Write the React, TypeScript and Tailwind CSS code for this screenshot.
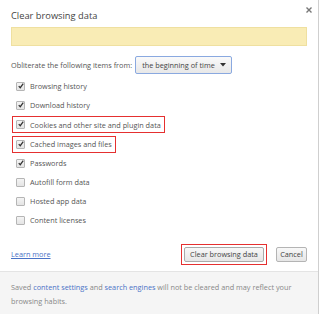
import React from "react";

const items = [
  { label: "Browsing history", checked: true, box: false },
  { label: "Download history", checked: true, box: false },
  { label: "Cookies and other site and plugin data", checked: true, box: true },
  { label: "Cached images and files", checked: true, box: true },
  { label: "Passwords", checked: true, box: false },
  { label: "Autofill form data", checked: false, box: false },
  { label: "Hosted app data", checked: false, box: false },
  { label: "Content licenses", checked: false, box: false },
];

function Check({ checked }: { checked: boolean }) {
  return (
    <span className="w-[9px] h-[9px] border border-[#b5b5b5] bg-gradient-to-b from-[#f4f4f4] to-[#e4e4e4] rounded-[1px] flex items-center justify-center shrink-0">
      {checked && (
        <svg width="8" height="8" viewBox="0 0 8 8" className="-mt-[1px] ml-[1px]">
          <path d="M1 4.2 L3 6.3 L7 0.8" fill="none" stroke="#333" strokeWidth="1.7" />
        </svg>
      )}
    </span>
  );
}

export default function App() {
  return (
    <div
      className="relative w-[319px] h-[314px] bg-white border-r border-[#cfcfcf] flex flex-col overflow-hidden"
      style={{ fontFamily: '"Open Sans", "Noto Sans", sans-serif' }}
    >
      <div className="absolute top-[7px] right-[6px] w-[6px] h-[6px]">
        <svg width="6" height="6" viewBox="0 0 6 6">
          <path d="M0.5 0.5 L5.5 5.5 M5.5 0.5 L0.5 5.5" stroke="#777" strokeWidth="1.4" />
        </svg>
      </div>
      <div className="pl-[11px] pt-[8px] h-[23px] text-[9.3px] leading-[15px] text-[#444] shrink-0">
        Clear browsing data
      </div>
      <div className="mx-[11px] mt-[4px] h-[19px] shrink-0 bg-[#f9ecb5] border border-[#efe0a0]" />
      <div className="mt-[10px] pl-[11px] h-[18px] shrink-0 flex items-center text-[7.3px] text-[#555]">
        <span>Obliterate the following items from:</span>
        <div className="ml-[3px] w-[97px] h-[18px] border border-[#8aa9e0] rounded-[2px] bg-gradient-to-b from-[#fafafa] to-[#e8e8e8] flex items-center pl-[6px] pr-[5px] justify-between">
          <span className="text-[#444]">the beginning of time</span>
          <svg width="6" height="4" viewBox="0 0 6 4">
            <path d="M0 0 H6 L3 3.5 Z" fill="#333" />
          </svg>
        </div>
      </div>
      <div className="mt-[3px] flex flex-col shrink-0">
        {items.map((it) => (
          <div key={it.label} className="h-[19.2px] flex items-center">
            {it.box ? (
              <div className="ml-[12px] h-[17px] border border-[#e53030] flex items-center pl-[3px] pr-[3px] gap-[5px]">
                <Check checked={it.checked} />
                <span className="text-[7.3px] text-[#555] whitespace-nowrap">{it.label}</span>
              </div>
            ) : (
              <div className="ml-[16px] flex items-center gap-[5px]">
                <Check checked={it.checked} />
                <span className="text-[7.3px] text-[#555] whitespace-nowrap">{it.label}</span>
              </div>
            )}
          </div>
        ))}
      </div>
      <div className="mt-[13px] h-[21px] shrink-0 flex items-center pl-[11px] pr-[11px]">
        <span className="text-[7.3px] text-[#4a72c6] underline">Learn more</span>
        <div className="ml-auto border border-[#e53030] p-[2px] flex">
          <div className="w-[80px] h-[15px] border border-[#aaa] rounded-[2px] bg-gradient-to-b from-[#f8f8f8] to-[#e6e6e6] flex items-center justify-center text-[7.3px] text-[#444]">
            Clear browsing data
          </div>
        </div>
        <div className="ml-[9px] w-[31px] h-[15px] border border-[#b4b4b4] rounded-[2px] bg-gradient-to-b from-[#f8f8f8] to-[#e6e6e6] flex items-center justify-center text-[7.3px] text-[#444]">
          Cancel
        </div>
      </div>
      <div className="mt-[6px] flex-1 bg-[#f5f5f5] border-t border-[#e4e4e4] pl-[11px] pr-[20px] pt-[8px] text-[7.3px] leading-[14px] text-[#888]">
        <p>
          Saved <span className="text-[#4a72c6]">content settings</span> and{" "}
          <span className="text-[#4a72c6]">search engines</span> will not be cleared and may reflect your
        </p>
        <p>browsing habits.</p>
      </div>
    </div>
  );
}
